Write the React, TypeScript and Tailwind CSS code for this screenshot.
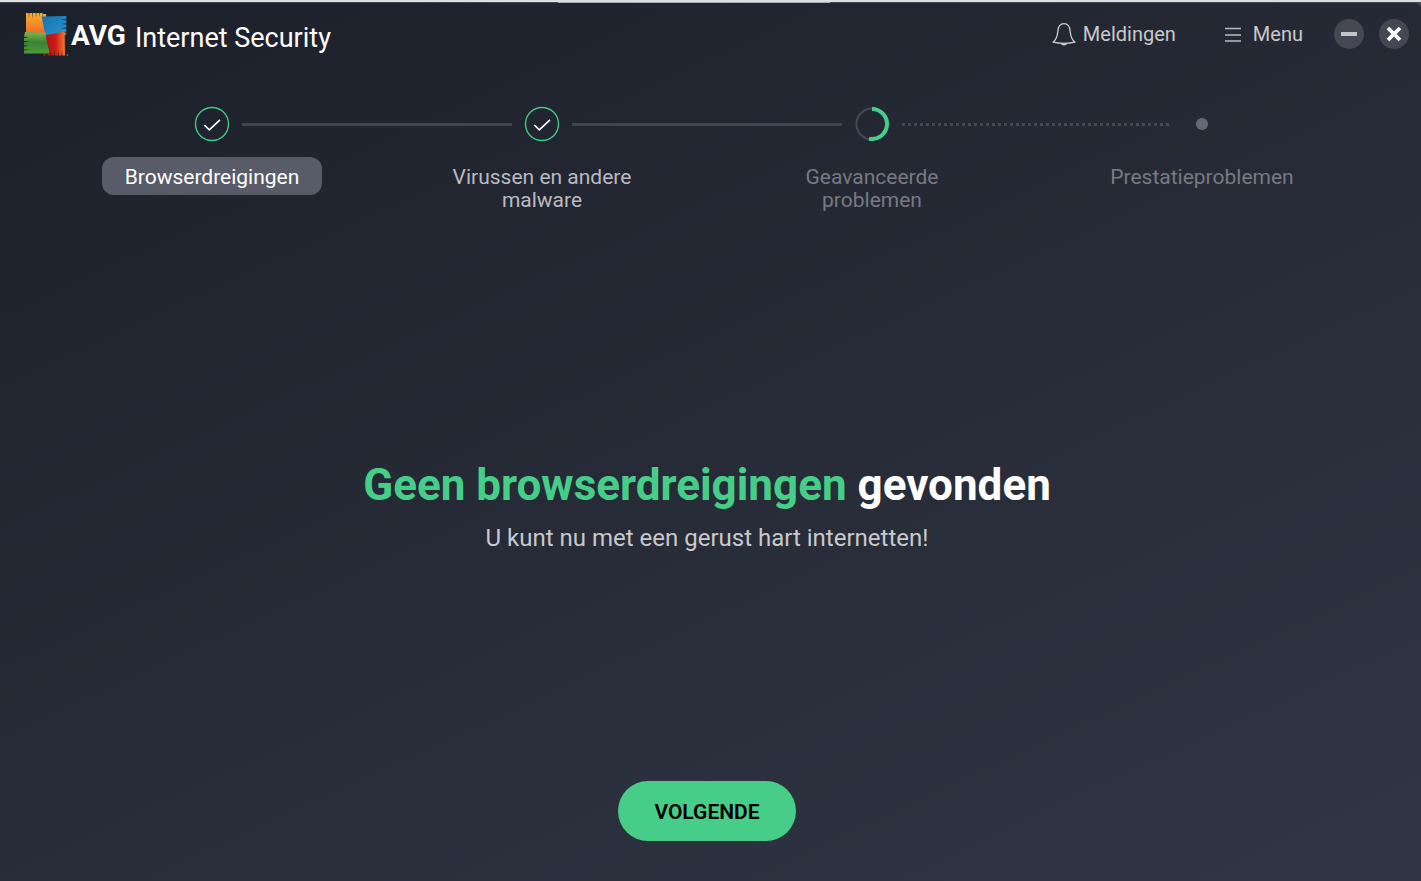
import type { ReactNode } from "react";

type StepState = "done" | "running" | "waiting";

const steps: { label: string; state: StepState; labelClass: string }[] = [
  {
    label: "Browserdreigingen",
    state: "done",
    labelClass: "rounded-xl bg-[#585c69] text-white",
  },
  {
    label: "Virussen en andere malware",
    state: "done",
    labelClass: "text-[#b9bbc0]",
  },
  {
    label: "Geavanceerde problemen",
    state: "running",
    labelClass: "text-[#777a82]",
  },
  {
    label: "Prestatieproblemen",
    state: "waiting",
    labelClass: "text-[#777a82]",
  },
];

function Logo() {
  return (
    <svg viewBox="0 0 46 44" className="h-11 w-[46px]" aria-hidden="true">
      <defs>
        <linearGradient id="orange" x1="0" y1="0" x2="0" y2="1">
          <stop offset="0" stopColor="#f8b02c" />
          <stop offset="1" stopColor="#ee6a26" />
        </linearGradient>
        <linearGradient id="blue" x1="0" y1="0" x2="1" y2="1">
          <stop offset="0" stopColor="#1672b0" />
          <stop offset="1" stopColor="#2a96cc" />
        </linearGradient>
        <linearGradient id="green" x1="0" y1="0" x2="0" y2="1">
          <stop offset="0" stopColor="#7cb54a" />
          <stop offset="0.5" stopColor="#3b8234" />
          <stop offset="1" stopColor="#4a9c3a" />
        </linearGradient>
        <linearGradient id="red" x1="0" y1="0" x2="1" y2="0">
          <stop offset="0" stopColor="#b90f14" />
          <stop offset="0.5" stopColor="#c91a18" />
          <stop offset="1" stopColor="#f47a24" />
        </linearGradient>
      </defs>
      <path
        fill="url(#orange)"
        d="M3 1h2.6l.4 5 .4-5h2.8l.3 6 .4-6h2.7l.4 5 .4-5h2.8l.3 4 .4-4h2.6l.3 4 .3-3h3v3L20 5l4 17L3 20z"
      />
      <path
        fill="url(#blue)"
        d="M18.6 4.6 43.4 4v3l-6 .8 6 .4v3l-5 .8 5 .5v3l-6 .7 6 .5v3l-5 .6 5 .5-.4 2.4-20.3 1.6z"
      />
      <path
        fill="url(#green)"
        d="M2 20l20.4.8 4.4 20.6H1v-2.8l6-.8-6-.4v-3l5-.7-5-.5v-3l6-.8-6-.4v-3l5-.8-5-.4z"
      />
      <path
        fill="url(#red)"
        d="M22.6 23.2 41.6 19.6l.4 24h-2.6l-.4-5-.4 5h-2.9l-.4-6-.4 6H31.9l-.4-5-.4 5h-2.8l-.4-4-.4 4h-2.5l-.3-2.2h2.5z"
      />
      <path fill="#c81f1a" d="M20.6 42h1.6v1.6h-1.6z" />
      <circle cx="44.5" cy="43" r="0.7" fill="#9a9ca2" />
    </svg>
  );
}

function BellIcon() {
  return (
    <svg
      viewBox="0 0 24 24"
      className="size-6"
      fill="none"
      stroke="#c8c9cc"
      strokeWidth="1.3"
      strokeLinejoin="round"
      aria-hidden="true"
    >
      <path d="M1 20.2C4.4 17.6 5.4 14.6 5.8 9.6 6.1 4.4 8.4 1.6 12 1.6s5.9 2.8 6.2 8c.4 5 1.4 8 4.8 10.6-7 1.5-15 1.5-22 0z" />
      <path d="M9.4 21.6c.6 1.8 4.6 1.8 5.2 0z" fill="#c8c9cc" />
    </svg>
  );
}

function MenuIcon() {
  return (
    <svg
      viewBox="0 0 16 16"
      className="size-4"
      stroke="#b9bbc0"
      strokeWidth="1.4"
      aria-hidden="true"
    >
      <path d="M0 2.5h16M0 9h16M0 15h16" />
    </svg>
  );
}

function RoundButton({ label, children }: { label: string; children: ReactNode }) {
  return (
    <button
      type="button"
      aria-label={label}
      className="flex size-[30px] items-center justify-center rounded-full bg-[#454852] hover:bg-[#585c69]"
    >
      {children}
    </button>
  );
}

function Header() {
  return (
    <header className="flex items-start justify-between pr-3 pl-[23px]">
      <div className="flex items-center pt-[9px]">
        <Logo />
        <span className="ml-[2px] pt-1 text-[28px] leading-8 font-bold text-white">
          AVG
        </span>
        <h1 className="ml-[9px] pt-2 text-[27px] leading-8 text-white">
          Internet Security
        </h1>
      </div>
      <nav className="flex items-center pt-4 text-xl text-[#c8c9cc]">
        <button type="button" className="flex items-center gap-[7px]">
          <BellIcon />
          Meldingen
        </button>
        <button type="button" className="ml-[49px] flex items-center gap-3">
          <MenuIcon />
          Menu
        </button>
        <div className="ml-[31px] flex gap-[15px]">
          <RoundButton label="Minimaliseren">
            <svg viewBox="0 0 16 16" className="size-4" aria-hidden="true">
              <path d="M0 6h16v4H0z" fill="#c3c4c8" />
            </svg>
          </RoundButton>
          <RoundButton label="Sluiten">
            <svg viewBox="0 0 16 16" className="size-4" aria-hidden="true">
              <path d="M2 2l12 12M14 2L2 14" stroke="#fff" strokeWidth="3.8" />
            </svg>
          </RoundButton>
        </div>
      </nav>
    </header>
  );
}

function Marker({ state }: { state: StepState }) {
  if (state === "waiting") {
    return <span className="size-3 rounded-full bg-[#676a74]" />;
  }
  if (state === "running") {
    return (
      <svg viewBox="0 0 36 36" className="size-9" fill="none" aria-hidden="true">
        <circle cx="18" cy="18" r="15.5" stroke="#454852" strokeWidth="2" />
        <path
          d="M18 3a15 15 0 1 1-3 29.7"
          stroke="#46ce88"
          strokeWidth="4"
        />
      </svg>
    );
  }
  return (
    <svg viewBox="0 0 36 36" className="size-9" fill="none" aria-hidden="true">
      <circle cx="18" cy="18" r="16.5" stroke="#42c983" strokeWidth="1.4" />
      <path d="M10.3 19l5 4.8L26 13.8" stroke="#fff" strokeWidth="1.6" />
    </svg>
  );
}

function Connector({ dotted }: { dotted: boolean }) {
  return dotted ? (
    <span className="h-[3px] flex-1 bg-[repeating-linear-gradient(to_right,#454852_0_3px,transparent_3px_6px)]" />
  ) : (
    <span className="h-[3px] flex-1 bg-[#414550]" />
  );
}

function Progress() {
  return (
    <section aria-label="Voortgang" className="mt-[50px] pr-[54px] pl-[47px]">
      <div className="mx-[calc(12.5%-30px)] flex h-9 items-center">
        {steps.map((step, i) => (
          <div
            key={step.label}
            className={i > 0 ? "flex flex-1 items-center" : "flex items-center"}
          >
            {i > 0 && <Connector dotted={step.state === "waiting"} />}
            <span className="flex w-[60px] justify-center">
              <Marker state={step.state} />
            </span>
          </div>
        ))}
      </div>
      <ol className="mt-[15px] grid grid-cols-4 items-start justify-items-center text-center text-[21px] leading-[23px]">
        {steps.map((step) => (
          <li
            key={step.label}
            className={`w-[220px] px-[18px] pt-[9px] pb-[6px] ${step.labelClass}`}
          >
            {step.label}
          </li>
        ))}
      </ol>
    </section>
  );
}

export default function App() {
  return (
    <div className="min-h-screen bg-[#454852] font-['Roboto',sans-serif]">
      <div className="flex h-[3px] justify-center border-t-2 border-[#dcdedf] pr-[33px]">
        <span className="h-px w-[272px] bg-[#a9acaf]" />
      </div>
      <div className="flex min-h-[calc(100vh-3px)] flex-col rounded-tr-md bg-linear-[155deg] from-[#1c202a] to-[#303644]">
        <Header />
        <Progress />
        <main className="flex flex-1 flex-col items-center justify-center pt-3 pr-[7px] text-center">
          <h2 className="text-[44px] leading-[54px] font-bold text-white">
            <span className="text-[#46ce88]">Geen browserdreigingen</span> gevonden
          </h2>
          <p className="mt-2.5 text-2xl text-[#c8c9cc]">
            U kunt nu met een gerust hart internetten!
          </p>
        </main>
        <footer className="flex justify-center pr-[7px] pb-10">
          <button
            type="button"
            className="h-[60px] w-[178px] rounded-full bg-[#46ce88] pt-[3px] text-[21px] font-semibold text-black hover:bg-[#5bdb99]"
          >
            VOLGENDE
          </button>
        </footer>
      </div>
    </div>
  );
}
